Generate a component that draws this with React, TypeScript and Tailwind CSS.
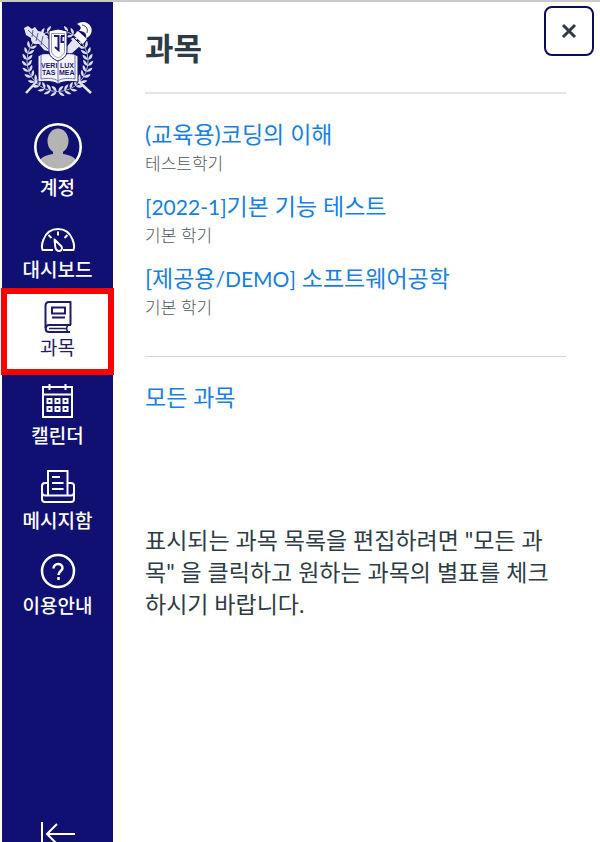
import React from 'react';

interface NavItemProps {
  label: string;
  icon: React.ReactNode;
  className?: string;
}

interface Course {
  name: string;
  term: string;
}

const courses: Course[] = [
  { name: '(교육용)코딩의 이해', term: '테스트학기' },
  { name: '[2022-1]기본 기능 테스트', term: '기본 학기' },
  { name: '[제공용/DEMO] 소프트웨어공학', term: '기본 학기' },
];

// Angles of the laurel leaves, open at the top behind the shield
const leaves = Array.from({ length: 30 }, (_, i) => -74 + i * (328 / 29));

const Crest: React.FC = () => (
  <svg width="76" height="76" viewBox="0 0 76 76" fill="none" aria-hidden="true">
    {/* Laurel wreath */}
    <ellipse cx="37.500" cy="41" rx="30.500" ry="30.500" stroke="#b4b7dc" strokeWidth="1" />
    {leaves.map((angle) => {
      const rad = (angle * Math.PI) / 180;
      const x = 37.5 + 30.5 * Math.cos(rad);
      const y = 41 + 30.5 * Math.sin(rad);
      const flip = angle > 90 ? 1 : -1;
      return (
        <g key={angle} transform={`translate(${x} ${y}) rotate(${angle}) scale(1 ${flip})`} fill="#dfe1f3">
          <path d="M0-2C1 1 3 3 5 3.500C5 0 3-2 0-2Z" />
          <path d="M0-2C-1 1-3 3-5 3.500C-5 0-3-2 0-2Z" />
        </g>
      );
    })}
    {/* Quill */}
    <path d="M4 8L8 6L12 9L15 7L18 11L23 12L31 22V32L24 30L19 24L13 23L11 18L6 15Z" fill="#e3e5f5" />
    <path d="M8 10L28 29M13 10L12 17M18 13L16 21M23 16L21 25" stroke="#5558a3" strokeWidth="1" />
    <path d="M56 59L71 73" stroke="#e3e5f5" strokeWidth="2.500" />
    {/* Torch */}
    <path d="M45 29L54 18L61 25L49 36Z" fill="#e3e5f5" />
    <path d="M52 16L62 26" stroke="#101073" strokeWidth="1" />
    <path d="M54 15L58 11L67 19L63 24Z" fill="#ffffff" />
    <path d="M59 11C62 8 61 6 57 4C61 1 68 1 71 7C73 12 70 17 66 18C67 13 64 11 59 11Z" fill="#ffffff" />
    <path d="M62 5C67 6 68 9 67 13" stroke="#35378a" strokeWidth="1" />
    <path d="M19 59L6 73" stroke="#e3e5f5" strokeWidth="2.500" />
    {/* Open book */}
    <path d="M18 36L22 34C28 33 34 34 38 37C42 34 48 33 54 34L58 36V62C50 61 43 61 38 64C33 61 26 61 18 62Z" fill="#f4f4fb" stroke="#101073" strokeWidth="1" />
    <path d="M21 35V59C28 58 34 58 38 61C42 58 48 58 55 59V35M38 37V63" stroke="#7074b3" strokeWidth="1" />
    <g fill="#18186e" fontFamily="Liberation Sans, sans-serif" fontSize="7" fontWeight="700">
      <text x="21" y="48">VERI</text>
      <text x="40" y="48">LUX</text>
      <text x="22" y="55">TAS</text>
      <text x="39" y="55">MEA</text>
    </g>
    {/* Shield */}
    <path d="M29 11L38 9L47 11V31C47 36 43 39 38 41C33 39 29 36 29 31Z" fill="#ffffff" stroke="#101073" strokeWidth="1" />
    <path d="M31.500 13.500H44.500V31C44.500 34 42 36 38 38C34 36 31.500 34 31.500 31Z" stroke="#9698ca" strokeWidth="1" />
    <path d="M34 16H38.500V30L35 27M41 16H44.500M41.500 16V22H44" stroke="#18186e" strokeWidth="2" />
  </svg>
);

const GaugeIcon: React.FC = () => (
  <svg width="36" height="36" viewBox="0 0 36 36" fill="none" stroke="currentColor" strokeWidth="2" aria-hidden="true">
    <path d="M13 29H2.500C1.500 26 2 22 3.500 18.500C6 12 11.500 8 18 8S30 12 32.500 18.500C34 22 34.500 26 33.500 29H23" strokeLinejoin="round" />
    <path d="M18 10.500V14.500M8.500 14L11.500 17M27.500 14L24.500 17" />
    <path d="M14.500 18.500L21.500 25.500C23 28 21 30.500 18.500 30C16.500 29.500 15.500 28 15.300 26Z" strokeLinejoin="round" />
  </svg>
);

const BookIcon: React.FC = () => (
  <svg width="36" height="36" viewBox="0 0 36 36" fill="none" stroke="currentColor" strokeWidth="2" aria-hidden="true">
    <path d="M30.500 26V3H9C6.500 3 5.500 4.500 5.500 7V29" strokeLinejoin="round" />
    <path d="M31 26H9C4.500 26 4.500 33 9 33H30" />
    <path d="M28 26C26.500 28 26.500 31 28 33M9 29.500H26" strokeWidth="1.500" />
    <path d="M12 8.500H25V14.500H12ZM12 18.500H25" />
  </svg>
);

const CalendarIcon: React.FC = () => (
  <svg width="36" height="36" viewBox="0 0 36 36" fill="none" stroke="currentColor" strokeWidth="2" aria-hidden="true">
    <path d="M3 4H32V34H3ZM3 11.500H32" />
    <path d="M9.500 1V7M25.500 1V7" />
    <path d="M7.500 16H11.500V20H7.500ZM15.500 16H19.500V20H15.500ZM23.500 16H27.500V20H23.500ZM7.500 24H11.500V28H7.500ZM15.500 24H19.500V28H15.500ZM23.500 24H27.500V28H23.500Z" />
  </svg>
);

const InboxIcon: React.FC = () => (
  <svg width="36" height="36" viewBox="0 0 36 36" fill="none" stroke="currentColor" strokeWidth="2" aria-hidden="true">
    <path d="M8 27V3H27.500V27" />
    <path d="M8 15H5C3 15 2 16 2 18V31C2 33 3 34 5 34H31C33 34 34 33 34 31V18C34 16 33 15 31 15H28" />
    <path d="M2 24C2 26 3 27.500 5 27.500H31C33 27.500 34 26 34 24" />
    <path d="M12 9H20M12 15H23.500M12 21H23.500" />
  </svg>
);

const HelpIcon: React.FC = () => (
  <svg width="36" height="36" viewBox="0 0 36 36" fill="none" stroke="currentColor" aria-hidden="true">
    <circle cx="18" cy="18" r="16" strokeWidth="2.500" />
    <path d="M13.500 15.500C13.500 9.500 22.500 9.500 22.500 15C22.500 18 18.500 18 18.500 22" strokeWidth="2.500" />
    <path d="M18.500 24V27" strokeWidth="2.500" />
  </svg>
);

const NavItem: React.FC<NavItemProps> = ({ label, icon, className = 'gap-[5px] pt-2 pb-3' }) => (
  <a href="#" className={`flex flex-col items-center ${className}`}>
    {icon}
    <span className="text-[19px] leading-6 whitespace-nowrap">{label}</span>
  </a>
);

const Sidebar: React.FC = () => (
  <nav className="ml-0.5 flex w-[111px] shrink-0 flex-col bg-[#101073] font-medium text-white">
    <a href="#" aria-label="홈" className="flex justify-center pt-[18px] pb-[27px]">
      <Crest />
    </a>
    <a href="#" className="flex flex-col items-center gap-[5px] pb-[21px]">
      <svg width="48" height="48" viewBox="0 0 48 48" aria-hidden="true">
        <clipPath id="avatar">
          <circle cx="24" cy="24" r="23" />
        </clipPath>
        <g clipPath="url(#avatar)" fill="#b4b4b4">
          <ellipse cx="24" cy="18" rx="10.500" ry="12.500" />
          <path d="M19 27H29V31C37 32 42 35 44 40V48H4V40C6 35 11 32 19 31Z" />
        </g>
        <circle cx="24" cy="24" r="22.700" fill="none" stroke="#ffffff" strokeWidth="2.600" />
      </svg>
      <span className="text-[19px] leading-6">계정</span>
    </a>
    <NavItem label="대시보드" icon={<GaugeIcon />} className="gap-px pb-1.5" />
    <NavItem
      label="과목"
      icon={<BookIcon />}
      className="-mx-px gap-px border-6 border-[#ff0000] bg-white pt-[5px] pb-[9px] font-normal text-[#1c1c6b]"
    />
    <NavItem label="캘린더" icon={<CalendarIcon />} />
    <NavItem label="메시지함" icon={<InboxIcon />} />
    <NavItem label="이용안내" icon={<HelpIcon />} />
    <button type="button" aria-label="메뉴 접기" className="mt-auto flex h-5 justify-center overflow-hidden">
      <svg width="36" height="24" viewBox="0 0 36 24" fill="none" stroke="currentColor" strokeWidth="2" className="shrink-0" aria-hidden="true">
        <path d="M2 0V24M35 12H7M17 2L7 12L17 22" />
      </svg>
    </button>
  </nav>
);

// Latin runs are set slightly smaller than the Hangul around them
const CourseName: React.FC<{ name: string }> = ({ name }) => (
  <>
    {name.split(/([\x21-\x7e]{2,})/).map((part, i) =>
      i % 2 === 1 ? (
        <span key={i} className="text-[21px] leading-none">
          {part}
        </span>
      ) : (
        part
      ),
    )}
  </>
);

const CoursePanel: React.FC = () => (
  <main className="min-w-0 flex-1 text-[23px] leading-8 font-normal text-[#2d3b45]">
    <header className="flex items-start justify-between pt-1 pr-1.5 pl-8">
      <h1 className="pt-6 text-[31px] leading-9 font-bold">과목</h1>
      <button
        type="button"
        aria-label="닫기"
        className="flex size-[50px] items-center justify-center rounded-lg border-2 border-[#0c0c5c]"
      >
        <svg width="16" height="16" viewBox="0 0 16 16" fill="none" stroke="#2d3b45" strokeWidth="3" aria-hidden="true">
          <path d="M2 2L14 14M14 2L2 14" />
        </svg>
      </button>
    </header>
    <div className="pr-[34px] pl-8">
      <hr className="mt-[26px] border-t-2 border-[#e4e4e4]" />
      <ul className="mt-6 flex flex-col gap-3.5">
        {courses.map((course) => (
          <li key={course.name}>
            <a href="#" className="block text-[#1480e6]">
              <CourseName name={course.name} />
            </a>
            <p className="mt-0.5 text-[17px] leading-6 font-light text-[#4f5860]">{course.term}</p>
          </li>
        ))}
      </ul>
      <hr className="mt-9 border-[#d4d4d4]" />
      <a href="#" className="mt-6 block text-[#1480e6]">
        모든 과목
      </a>
      <p className="mt-[111px] pr-2">
        표시되는 과목 목록을 편집하려면 "모든 과목" 을 클릭하고 원하는 과목의 별표를 체크하시기 바랍니다.
      </p>
    </div>
  </main>
);

const App: React.FC = () => (
  <div className="flex min-h-screen border-t-2 border-[#c9c9c9] bg-white font-[Lato,'Noto_Sans_CJK_KR',sans-serif]">
    <Sidebar />
    <CoursePanel />
  </div>
);

export default App;
